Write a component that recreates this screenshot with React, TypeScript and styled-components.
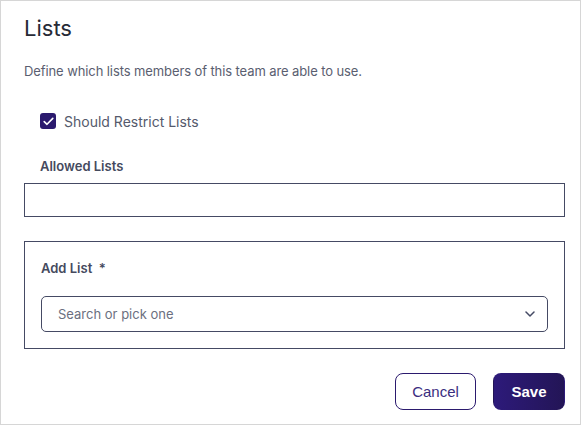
import React from "react";
import styled, { createGlobalStyle } from "styled-components";

const Global = createGlobalStyle`
  html, body { margin: 0; padding: 0; background: #ffffff; }
  * { box-sizing: border-box; }
`;

const Frame = styled.div`
  width: 581px;
  height: 425px;
  border: 1px solid #d6d6d6;
  padding: 13px 15px 0 23px;
  font-family: Inter, "Noto Sans", sans-serif;
  color: #2a2d3a;
  display: flex;
  flex-direction: column;
`;

const Title = styled.h1`
  margin: 0;
  font-size: 22px;
  line-height: 28px;
  font-weight: 400;
  color: #272a36;
`;

const Description = styled.p`
  margin: 19px 0 0;
  font-size: 13px;
  letter-spacing: -0.1px;
  line-height: 20px;
  color: #5a5e70;
`;

const CheckRow = styled.label`
  margin: 30px 0 0 16px;
  display: flex;
  align-items: center;
  gap: 8px;
  height: 20px;
  font-size: 14px;
  color: #555a6c;
`;

const CheckBox = styled.span`
  width: 16px;
  height: 16px;
  border-radius: 3px;
  background: #2b1a6e;
  display: flex;
  align-items: center;
  justify-content: center;
`;

const FieldLabel = styled.div<{ $inset?: boolean }>`
  margin: ${(p) => (p.$inset ? "0" : "26px 0 0 16px")};
  font-size: 13px;
  line-height: 18px;
  font-weight: 600;
  color: #454a5e;
`;

const TextBox = styled.div`
  margin-top: 8px;
  height: 34px;
  border: 1px solid #454a64;
`;

const Panel = styled.div`
  margin-top: 24px;
  border: 1px solid #454a64;
  padding: 17px 16px 16px 16px;
  display: flex;
  flex-direction: column;
`;

const Select = styled.div`
  margin-top: 19px;
  height: 36px;
  border: 1px solid #454a64;
  border-radius: 5px;
  display: flex;
  align-items: center;
  justify-content: space-between;
  padding: 0 12px 0 16px;
  font-size: 13px;
  color: #6b6f80;
`;

const Actions = styled.div`
  margin-top: 24px;
  display: flex;
  justify-content: flex-end;
  gap: 17px;
`;

const Button = styled.button<{ $primary?: boolean }>`
  height: 37px;
  width: ${(p) => (p.$primary ? "72px" : "81px")};
  border-radius: 8px;
  font-family: "Liberation Sans", Arial, sans-serif;
  font-size: 15px;
  font-weight: ${(p) => (p.$primary ? 700 : 400)};
  border: 1px solid ${(p) => (p.$primary ? "transparent" : "#2b1a6e")};
  background: ${(p) =>
    p.$primary ? "linear-gradient(90deg, #2d1a7a, #231556)" : "#ffffff"};
  color: ${(p) => (p.$primary ? "#ffffff" : "#3a2d80")};
  padding: 0;
`;

export default function App() {
  return (
    <>
      <Global />
      <Frame>
        <Title>Lists</Title>
        <Description>Define which lists members of this team are able to use.</Description>
        <CheckRow>
          <CheckBox>
            <svg width="11" height="9" viewBox="0 0 11 9" fill="none">
              <path d="M1.2 4.6 L4 7.3 L9.8 1.4" stroke="#ffffff" strokeWidth="1.6" strokeLinecap="round" strokeLinejoin="round" />
            </svg>
          </CheckBox>
          Should Restrict Lists
        </CheckRow>
        <FieldLabel>Allowed Lists</FieldLabel>
        <TextBox />
        <Panel>
          <FieldLabel $inset>Add List&nbsp; *</FieldLabel>
          <Select>
            <span>Search or pick one</span>
            <svg width="10" height="6" viewBox="0 0 10 6" fill="none">
              <path d="M1 1 L5 5 L9 1" stroke="#454a64" strokeWidth="1.5" strokeLinecap="round" strokeLinejoin="round" />
            </svg>
          </Select>
        </Panel>
        <Actions>
          <Button>Cancel</Button>
          <Button $primary>Save</Button>
        </Actions>
      </Frame>
    </>
  );
}
